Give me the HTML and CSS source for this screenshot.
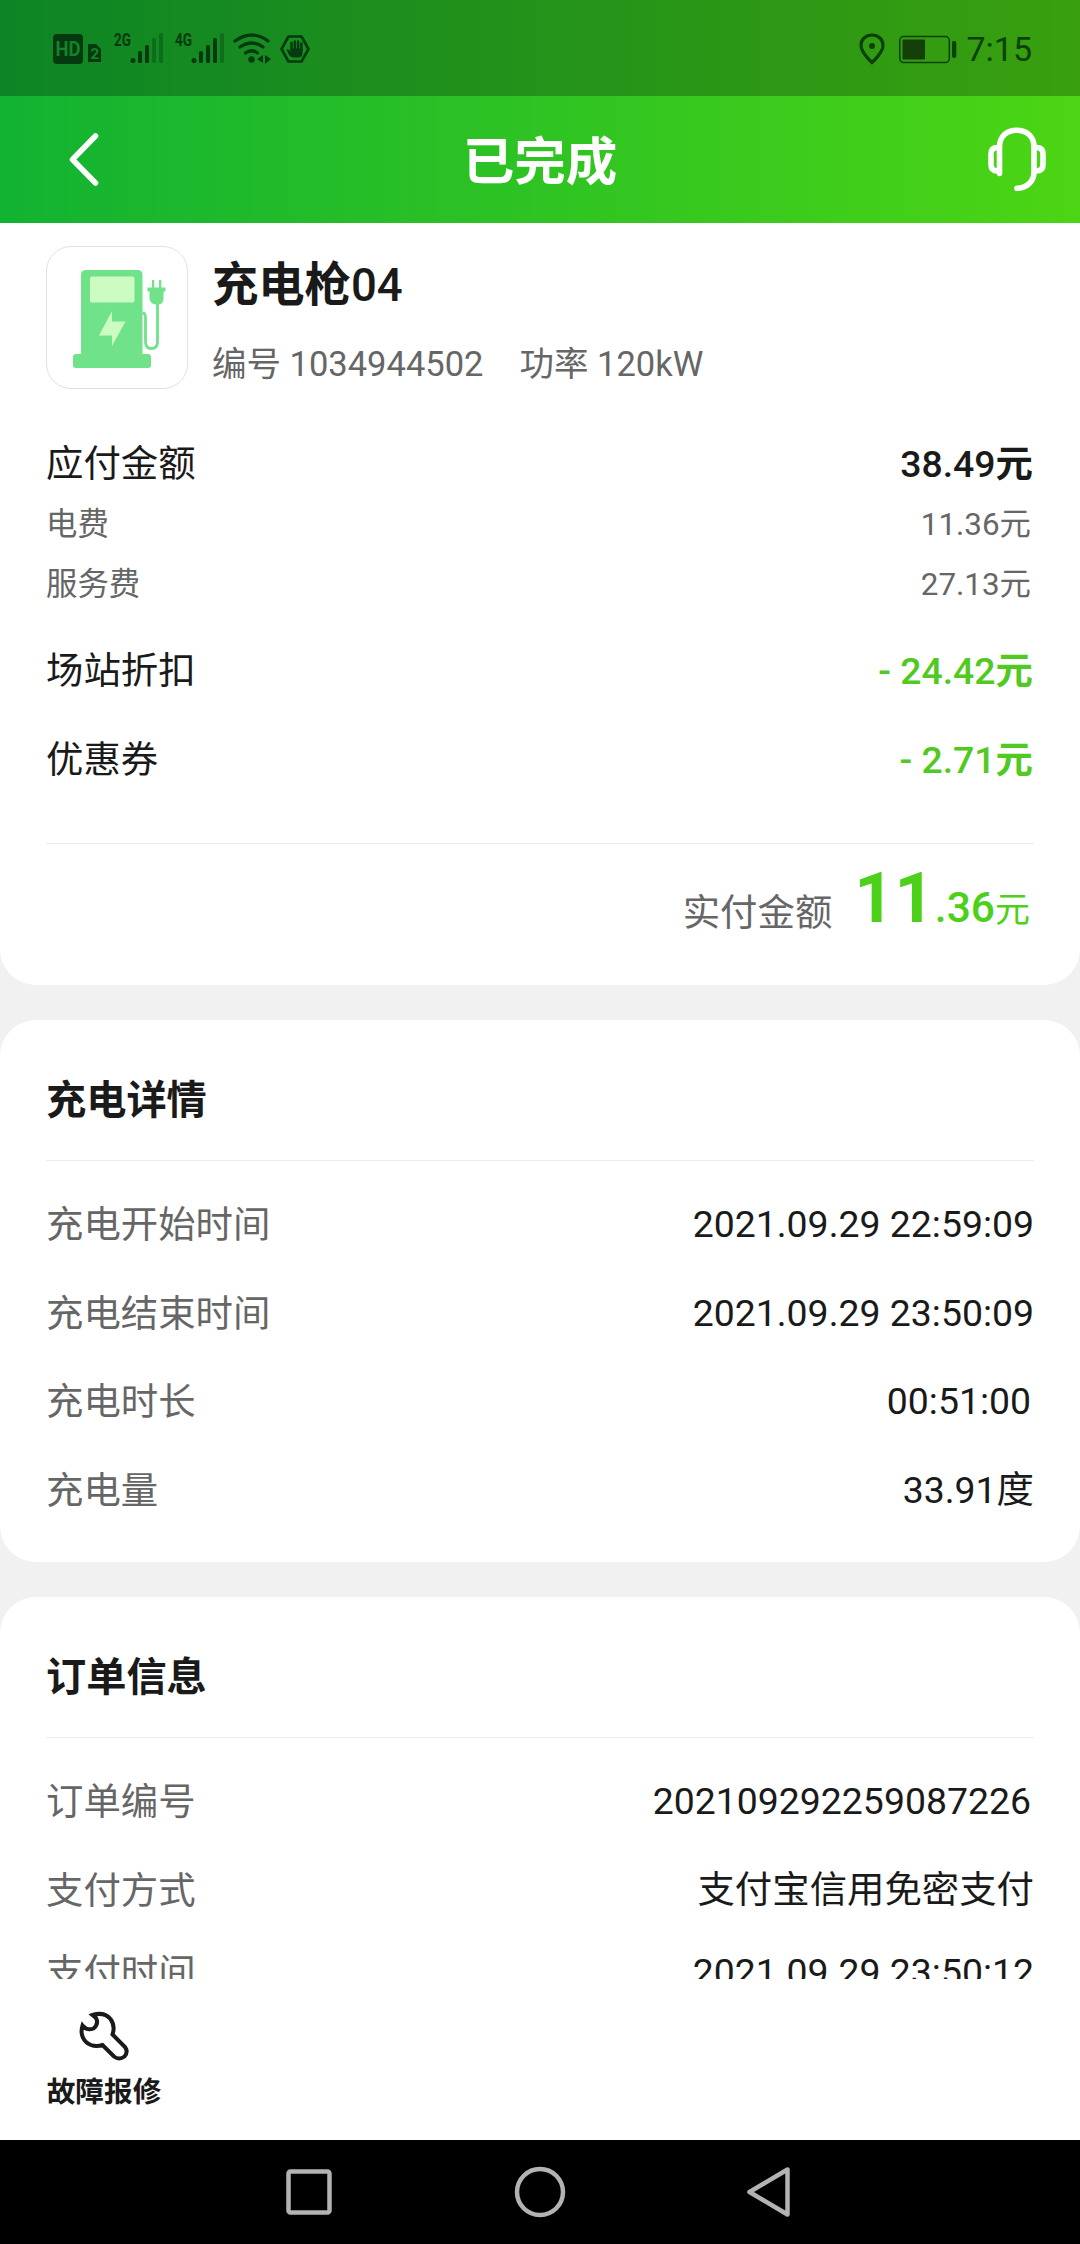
FILE: index.html
```html
<!DOCTYPE html>
<html lang="zh-CN">
<head>
<meta charset="utf-8">
<title>已完成</title>
<link rel="stylesheet" href="styles.css">
</head>
<body>
<div class="screen">
  <div class="top">
    <div class="status">
      <svg class="status-icons" width="320" height="96" viewBox="0 0 320 96">
        <g fill="#053a10">
          <rect x="53" y="34" width="30" height="30" rx="4"/>
          <path d="M88 44h8l5 5v13h-13z"/>
          <circle cx="133" cy="60.500" r="2.500"/>
          <rect x="138" y="51" width="4" height="12" rx="1.500"/>
          <rect x="145" y="45" width="4" height="18" rx="1.500"/>
          <g opacity=".35">
            <rect x="152" y="38" width="4" height="25" rx="1.500"/>
            <rect x="159" y="33" width="4" height="30" rx="1.500"/>
            <rect x="220" y="33" width="4" height="30" rx="1.500"/>
          </g>
          <circle cx="194" cy="60.500" r="2.500"/>
          <rect x="199" y="51" width="4" height="12" rx="1.500"/>
          <rect x="206" y="45" width="4" height="18" rx="1.500"/>
          <rect x="213" y="38" width="4" height="25" rx="1.500"/>
          <circle cx="251.500" cy="59.500" r="3.200"/>
          <path d="M263 55v8l-6-4zM265 55l6 4-6 5z"/>
          <path d="M290.500 48.500h12v4.500q0 4.500-4.500 4.500h-4q-3.500 0-5.500-3.500l-2-4.500q2-1 3 1l1 1.500z"/>
        </g>
        <g fill="none" stroke="#053a10" stroke-width="3.200" stroke-linecap="round">
          <path d="M235 41q17-12 33 0M240 47q12-8 23 0M245.500 53q6-4.500 12 0"/>
          <path d="M288.500 36.500h13l7 12.500-7 12.500h-13L281.500 49z" stroke-width="2.600" stroke-linejoin="round"/>
          <path d="M291.500 50V43M294.800 50V41.500M298.100 50V41.500M301.400 50V43.500" stroke-width="2.500"/>
        </g>
        <text x="55.500" y="56" class="glyph-hd" textLength="25" lengthAdjust="spacingAndGlyphs">HD</text>
        <text x="90.500" y="58.500" class="glyph-sim">2</text>
        <text x="114" y="46" class="glyph-net" textLength="17" lengthAdjust="spacingAndGlyphs">2G</text>
        <text x="175" y="46" class="glyph-net" textLength="17" lengthAdjust="spacingAndGlyphs">4G</text>
      </svg>
      <div class="status-right">
        <svg width="100" height="32" viewBox="0 0 100 32">
          <path d="M13 2C6.500 2 2 6.500 2 12.500 2 19.500 13 29.500 13 29.500S24 19.500 24 12.500C24 6.500 19.500 2 13 2z" fill="none" stroke="#0c4206" stroke-width="3.200"/>
          <circle cx="13" cy="13" r="3" fill="#0c4206"/>
          <rect x="40.800" y="3.600" width="49.500" height="26" rx="4" fill="none" stroke="#0c4206" stroke-width="1.500"/>
          <rect x="43.500" y="6.500" width="22.500" height="20" rx="1" fill="#143f08"/>
          <rect x="93" y="8" width="4.300" height="17" rx="2" fill="#0c4206"/>
        </svg>
        <span class="clock">7:15</span>
      </div>
    </div>
    <header class="navbar">
      <svg width="100" height="127" viewBox="0 0 100 127"><path d="M95.500 40L72.500 63.500 95.500 87" fill="none" stroke="#fff" stroke-width="5.500" stroke-linecap="round" stroke-linejoin="round"/></svg>
      <h1 class="nav-title">已完成</h1>
      <svg width="100" height="127" viewBox="0 0 100 127" fill="none" stroke="#fff" stroke-width="5.600">
        <path d="M19.500 77.500V51C19.500 40 27 34.200 36.700 34.200S54 40 54 51V76C54 86 46 92.300 37 92.300" stroke-linecap="round"/>
        <path d="M19.500 51.500H17.500Q11 51.500 11 58V68.500Q11 75 17.500 75H22M54 51.500H56.500Q63 51.500 63 58V68.500Q63 75 56.500 75H54"/>
      </svg>
    </header>
  </div>

  <main class="content">
    <section class="card card-summary">
      <div class="device">
        <div class="device-pic">
          <svg width="140" height="140" viewBox="0 0 140 140">
            <path d="M34 107V28Q34 23 39 23H90.500Q95.500 23 95.500 28V107H101Q104 107 104 110V118Q104 121 101 121H29Q26 121 26 118V110Q26 107 29 107z" fill="#70e28a"/>
            <rect x="43" y="29.500" width="44.500" height="26" rx="2" fill="#cdfcc3"/>
            <path d="M65 64L52 88.500H65V99L78.500 74.500H65z" fill="#cdfcc3"/>
            <path d="M95.500 66Q98.500 66 98.500 71V95Q98.500 101.500 104.500 101.500T110.500 95V55" fill="none" stroke="#70e28a" stroke-width="2.800"/>
            <path d="M105 33h2.300v7.500h4.700V33h2.300v7.500h4.200v4h-2v7.500q0 5.500-6.500 5.500t-7.500-5.500v-7.500h-2v-4h4.500z" fill="#70e28a"/>
          </svg>
        </div>
        <div class="device-text">
          <h2 class="device-name">充电枪<span class="device-no">04</span></h2>
          <p class="device-meta"><span>编号 1034944502</span><span>功率 120kW</span></p>
        </div>
      </div>
      <dl class="fees">
        <div class="row row-due"><dt>应付金额</dt><dd class="strong">38.49<b>元</b></dd></div>
        <div class="row row-sub"><dt>电费</dt><dd>11.36元</dd></div>
        <div class="row row-sub"><dt>服务费</dt><dd>27.13元</dd></div>
        <div class="row row-discount"><dt>场站折扣</dt><dd class="strong green">- 24.42<b>元</b></dd></div>
        <div class="row row-coupon"><dt>优惠券</dt><dd class="strong green">- 2.71<b>元</b></dd></div>
      </dl>
      <div class="paid">
        <span class="paid-label">实付金额</span>
        <span class="paid-value"><span class="paid-int">11</span><span class="paid-dec">.36</span>元</span>
      </div>
    </section>

    <section class="card">
      <h3 class="card-title">充电详情</h3>
      <dl class="details">
        <div class="row"><dt>充电开始时间</dt><dd>2021.09.29 22:59:09</dd></div>
        <div class="row"><dt>充电结束时间</dt><dd>2021.09.29 23:50:09</dd></div>
        <div class="row"><dt>充电时长</dt><dd class="inset">00:51:00</dd></div>
        <div class="row"><dt>充电量</dt><dd>33.91度</dd></div>
      </dl>
    </section>

    <section class="card card-order">
      <h3 class="card-title">订单信息</h3>
      <dl class="details">
        <div class="row"><dt>订单编号</dt><dd class="inset">202109292259087226</dd></div>
        <div class="row"><dt>支付方式</dt><dd>支付宝信用免密支付</dd></div>
        <div class="row row-last"><dt>支付时间</dt><dd>2021.09.29 23:50:12</dd></div>
      </dl>
    </section>
  </main>

  <footer class="toolbar">
    <div class="repair">
      <svg class="repair-icon" width="56" height="54" viewBox="0 0 56 54"><path d="M19.500 5Q31 1.500 37.500 9Q42.500 16 39.500 24.500L52 37Q55.500 42 51.500 46.500Q46 50.500 41 46.500L29.500 35Q20 38 13 32Q6.500 25 9.500 15.500Q14 21 20.500 18.500Q26 14 23 8z" fill="none" stroke="#1a1a1a" stroke-width="4"/></svg>
      <span>故障报修</span>
    </div>
  </footer>

  <nav class="sysnav">
    <svg width="1080" height="104" viewBox="0 0 1080 104" fill="none" stroke="#b3b3b3" stroke-width="4.500" stroke-linejoin="round">
      <rect x="288.500" y="31.500" width="41" height="41" rx="2"/>
      <circle cx="540" cy="52" r="23"/>
      <path d="M787.500 29.500V74.500L749.500 52z"/>
    </svg>
  </nav>
</div>
</body>
</html>
```
FILE: styles.css
```css
* { box-sizing: border-box; }
body, h1, h2, h3, p, dl, dd { margin: 0; }
body {
  font-family: Roboto, "Noto Sans CJK SC", sans-serif;
  font-size: 37.400px;
  color: #1a1a1a;
  background: #f1f1f1;
}
svg { display: block; flex: none; }
.screen {
  width: 1080px;
  height: 2244px;
  display: flex;
  flex-direction: column;
  overflow: hidden;
}

.top { background: linear-gradient(90deg, #12b232, #4cd514); height: 223px; flex: none; }
.status {
  height: 96px;
  display: flex;
  justify-content: space-between;
  align-items: center;
  background: rgba(0, 0, 0, .25);
}
.status-right { display: flex; align-items: center; gap: 7px; padding: 2px 48px 0 0; color: #0c4206; }
.clock { font-size: 34px; line-height: 40px; }
.glyph-hd { font: 700 19.500px Roboto, sans-serif; fill: #138526; }
.glyph-sim { font: 700 15px Roboto, sans-serif; fill: #138526; }
.glyph-net { font: 700 18.500px Roboto, sans-serif; fill: #053a10; }

.navbar { height: 127px; display: flex; justify-content: space-between; }
.nav-title { font-size: 51.500px; font-weight: 700; line-height: 133px; color: #fff; }

.content {
  height: 1756px;
  flex: none;
  overflow: hidden;
  display: flex;
  flex-direction: column;
  gap: 35px;
}
.card { flex: none; height: 542px; background: #fff; border-radius: 36px; padding: 0 46px; }
.card-summary { height: 762px; border-radius: 0 0 36px 36px; padding-top: 23px; }

.device { display: flex; gap: 24px; height: 143px; }
.device-pic { width: 142px; height: 143px; border: 1px solid #e2e2e2; border-radius: 25px; }
.device-name { font-size: 46.300px; font-weight: 700; line-height: 78px; }
.device-no { font-size: 45.500px; font-weight: 500; }
.device-meta { display: flex; gap: 36px; font-size: 34.500px; line-height: 79px; color: #666; }

.fees { padding-top: 44px; height: 455px; border-bottom: 1px solid #ebedef; }
.row { display: flex; justify-content: space-between; height: 88.500px; line-height: 88.500px; white-space: nowrap; }
.row dt { color: #666; }
.details dd { margin-top: -1px; }
.row-due, .row-sub { height: 60px; line-height: 62px; }
.row-due { height: 61px; }
.row-sub { font-size: 31.400px; color: #666; }
.row-due dt, .row-discount dt, .row-coupon dt { color: #1a1a1a; }
.row-discount { margin-top: 13px; }
.strong { font-weight: 500; padding-right: 1px; }
.row-sub dd, .inset { padding-right: 3px; }
.green { color: #52c922; }

.paid { display: flex; justify-content: flex-end; gap: 22px; line-height: 100px; padding: 5px 4px 0 0; }
.paid-label { color: #666; padding-top: 14px; }
.paid-value { font-size: 35px; color: #4cd019; }
.paid-int { font-size: 69.500px; font-weight: 700; letter-spacing: .4px; }
.paid-dec { font-size: 42.500px; font-weight: 500; }

.card-title { height: 141px; line-height: 161px; font-size: 40.200px; font-weight: 700; border-bottom: 1px solid #ebedef; }
.details { padding-top: 20px; }
.row-last { margin-top: -6px; }

.toolbar { height: 161px; flex: none; background: #fff; padding: 31px 46px 0; }
.repair { width: 116px; display: flex; flex-direction: column; align-items: center; font-size: 28.700px; font-weight: 700; line-height: 56px; white-space: nowrap; }
.repair-icon { margin-right: 6px; }

.sysnav { height: 104px; background: #000; flex: none; }
```
